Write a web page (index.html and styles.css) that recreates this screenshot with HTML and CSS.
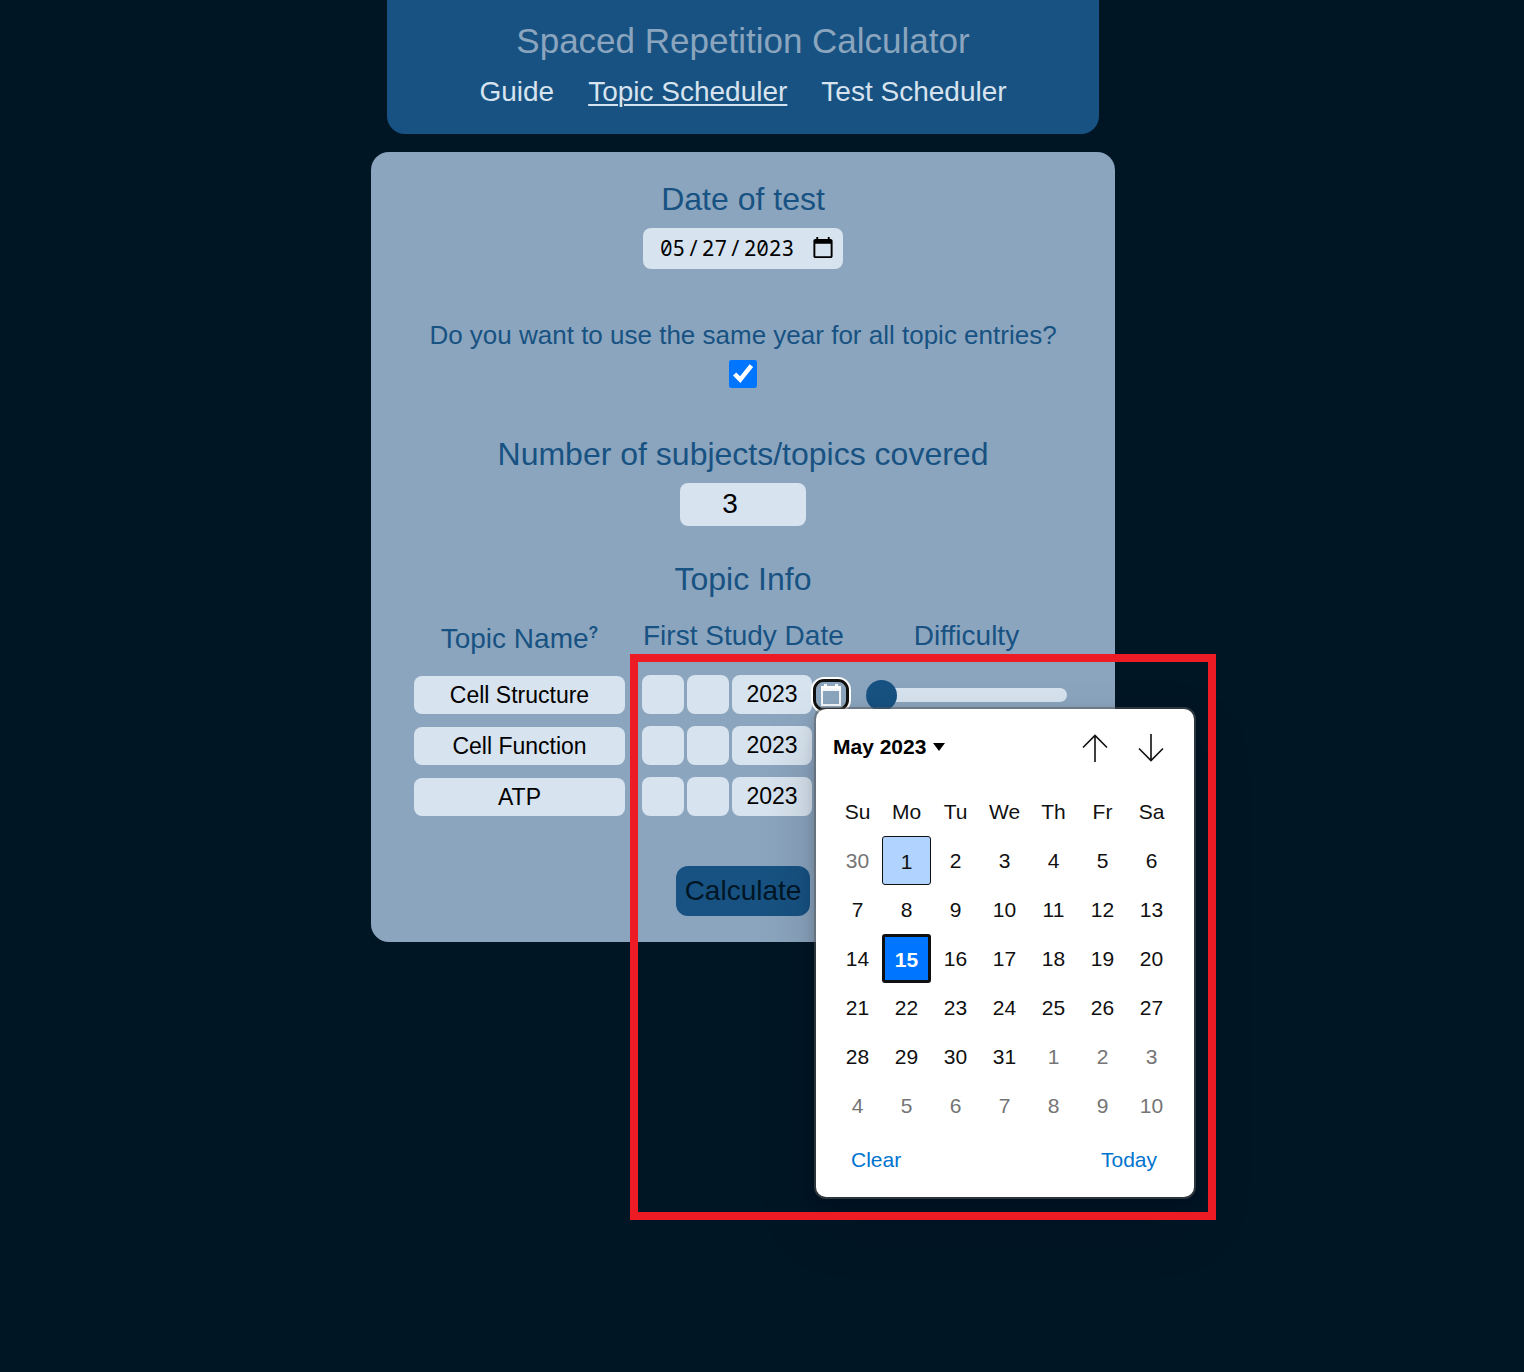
FILE: index.html
```html
<!DOCTYPE html>
<html lang="en-US">
<head>
<meta charset="utf-8">
<meta name="viewport" content="width=device-width, initial-scale=1">
<title>Spaced Repetition Calculator</title>
<link rel="stylesheet" href="styles.css">
</head>
<body>
<header class="site-header">
  <h1 class="site-title">Spaced Repetition Calculator</h1>
  <nav class="site-nav">
    <a href="#guide">Guide</a>
    <a href="#topics" class="active">Topic Scheduler</a>
    <a href="#tests">Test Scheduler</a>
  </nav>
</header>
<main>
<form class="card">
  <div class="field">
    <label class="field-label" for="test-date">Date of test</label>
    <input class="box test-date" id="test-date" type="date" value="2023-05-27">
  </div>
  <div class="field same-year">
    <label class="question" for="same-year">Do you want to use the same year for all topic entries?</label>
    <input class="check" id="same-year" type="checkbox" checked>
  </div>
  <div class="field topic-count">
    <label class="field-label" for="count">Number of subjects/topics covered</label>
    <input class="box count" id="count" type="number" value="3">
  </div>
  <h2 class="field-label topic-heading">Topic Info</h2>
  <div class="topics">
    <div class="topic-row heads">
      <div class="head" id="h-name">Topic Name<sup>?</sup></div>
      <div class="head head-date" id="h-date">First Study Date</div>
      <div class="head" id="h-diff">Difficulty</div>
    </div>
    <div class="topic-row">
      <input class="box name" type="text" value="Cell Structure" aria-labelledby="h-name">
      <div class="study-date">
        <input class="box part" type="text" aria-label="Month">
        <input class="box part" type="text" aria-label="Day">
        <input class="box year" type="text" value="2023" aria-label="Year">
        <button class="picker open" type="button" aria-label="Choose date">
          <svg width="20" height="22" viewBox="0 0 20 22"><path d="M1 3h18v18H1z" fill="none" stroke="currentColor" stroke-width="2"/><path d="M0 2h20v5H0zM3 0h3v3H3zM14 0h3v3h-3z" fill="currentColor"/></svg>
        </button>
        <div class="calendar">
          <div class="calendar-bar">
            <button class="month" type="button">May 2023 <svg width="12" height="8" viewBox="0 0 12 8"><path d="M0 0h12L6 8z" fill="#000"/></svg></button>
            <button class="arrow" type="button" aria-label="Previous month"><svg width="28" height="28" viewBox="0 0 28 28"><path d="M14 28V1M2 13.500 14 1.500l12 12" fill="none" stroke="#111" stroke-width="1.600"/></svg></button>
            <button class="arrow" type="button" aria-label="Next month"><svg width="28" height="28" viewBox="0 0 28 28"><path d="M14 0v27M2 14.500l12 12 12-12" fill="none" stroke="#111" stroke-width="1.600"/></svg></button>
          </div>
          <table class="days">
            <thead><tr><th>Su</th><th>Mo</th><th>Tu</th><th>We</th><th>Th</th><th>Fr</th><th>Sa</th></tr></thead>
            <tbody>
              <tr><td class="other">30</td><td><button type="button" class="day today">1</button></td><td>2</td><td>3</td><td>4</td><td>5</td><td>6</td></tr>
              <tr><td>7</td><td>8</td><td>9</td><td>10</td><td>11</td><td>12</td><td>13</td></tr>
              <tr><td>14</td><td><button type="button" class="day selected">15</button></td><td>16</td><td>17</td><td>18</td><td>19</td><td>20</td></tr>
              <tr><td>21</td><td>22</td><td>23</td><td>24</td><td>25</td><td>26</td><td>27</td></tr>
              <tr><td>28</td><td>29</td><td>30</td><td>31</td><td class="other">1</td><td class="other">2</td><td class="other">3</td></tr>
              <tr><td class="other">4</td><td class="other">5</td><td class="other">6</td><td class="other">7</td><td class="other">8</td><td class="other">9</td><td class="other">10</td></tr>
            </tbody>
          </table>
          <div class="calendar-foot">
            <button type="button">Clear</button>
            <button type="button">Today</button>
          </div>
        </div>
      </div>
      <input class="slider" type="range" min="0" max="10" value="0" aria-labelledby="h-diff">
    </div>
    <div class="topic-row">
      <input class="box name" type="text" value="Cell Function" aria-labelledby="h-name">
      <div class="study-date">
        <input class="box part" type="text" aria-label="Month">
        <input class="box part" type="text" aria-label="Day">
        <input class="box year" type="text" value="2023" aria-label="Year">
      </div>
      <input class="slider" type="range" min="0" max="10" value="0" aria-labelledby="h-diff">
    </div>
    <div class="topic-row">
      <input class="box name" type="text" value="ATP" aria-labelledby="h-name">
      <div class="study-date">
        <input class="box part" type="text" aria-label="Month">
        <input class="box part" type="text" aria-label="Day">
        <input class="box year" type="text" value="2023" aria-label="Year">
      </div>
      <input class="slider" type="range" min="0" max="10" value="0" aria-labelledby="h-diff">
    </div>
    <div class="highlight"></div>
  </div>
  <button class="calculate" type="submit">Calculate</button>
</form>
</main>
</body>
</html>
```
FILE: styles.css
```css
* { box-sizing: border-box; }
body {
  margin: 0;
  padding-right: 38px;
  min-height: 100vh;
  background: #001625;
  color: #175282;
  font-family: "Liberation Sans", Arial, sans-serif;
  font-size: 28px;
}
input, button { font-family: inherit; margin: 0; border: 0; padding: 0; }
button { background: none; cursor: pointer; }
h1, h2 { margin: 0; font-weight: 400; }

.site-header {
  max-width: 712px;
  margin: 0 auto 18px;
  padding: 21px 16px 26px;
  border-radius: 0 0 18px 18px;
  background: #175282;
  text-align: center;
}
.site-title { color: #8ba5be; font-size: 35px; line-height: 40px; }
.site-nav { display: flex; justify-content: center; gap: 34px; margin-top: 15px; line-height: 32px; }
.site-nav a { color: #d7e3ee; text-decoration: none; }
.site-nav .active { text-decoration: underline; text-decoration-thickness: 2px; text-underline-offset: 3px; }

.card {
  display: flex;
  flex-direction: column;
  align-items: center;
  max-width: 744px;
  margin: 0 auto;
  padding: 29px 43px 26px;
  border-radius: 18px;
  background: #8ba5be;
}
.field { display: flex; flex-direction: column; align-items: center; gap: 11px; }
.field-label { font-size: 32px; line-height: 36px; }
.same-year { margin-top: 51px; gap: 10px; }
.topic-count { margin-top: 48px; }
.question { font-size: 26px; line-height: 30px; }
.topic-heading { margin-top: 35px; }
.box { border-radius: 8px; background: #d7e3ee; color: #000; text-align: center; }
.test-date {
  width: 200px;
  height: 41px;
  padding: 0 8px 1px 16px;
  font-family: "Noto Sans Mono", "DejaVu Sans Mono", monospace;
  font-size: 21px;
  text-align: left;
}
.test-date::-webkit-datetime-edit-text { padding: 0 1px; }
.test-date::-webkit-calendar-picker-indicator { width: 24px; height: 24px; padding: 0; margin-left: 0; }
.check { width: 28px; height: 28px; accent-color: #0075ff; }
.count { width: 126px; height: 43px; padding: 0 11px 2px 0; font-size: 28px; }

.topics { position: relative; align-self: stretch; display: grid; gap: 12px; margin-top: 23px; }
.topic-row { display: grid; grid-template-columns: 211px 207px 201px; column-gap: 17px; align-items: center; height: 39px; }
.heads { align-items: start; height: 43px; }
.head { text-align: center; line-height: 32px; }
.head-date { text-align: left; padding-left: 1px; }
.head sup { font-size: 16px; font-weight: 700; line-height: 26px; }
.name { width: 100%; height: 38px; padding-top: 2px; font-size: 23px; }
.study-date { position: relative; display: flex; height: 39px; gap: 3px; align-items: center; }
.part { width: 42px; height: 39px; font-size: 23px; }
.year { width: 80px; height: 39px; font-size: 23px; }
.picker {
  display: flex;
  align-items: center;
  justify-content: center;
  width: 30px;
  height: 26px;
  border-radius: 8px;
  color: rgba(255, 255, 255, .9);
}
.picker.open { margin-left: 1px; outline: 3px solid #101010; box-shadow: 0 0 0 5px #fff; }

.slider { appearance: none; width: 100%; height: 31px; background: none; }
.slider::-webkit-slider-runnable-track { height: 14px; border-radius: 7px; background: #d7e3ee; }
.slider::-webkit-slider-thumb { appearance: none; width: 31px; height: 31px; margin-top: -8px; border-radius: 50%; background: #175282; }

.calendar {
  position: absolute;
  z-index: 2;
  top: 34px;
  left: 174px;
  width: 378px;
  padding: 10px 17px 23px;
  border-radius: 10px;
  background: #fff;
  color: #101010;
  font-size: 21px;
  box-shadow: 0 0 0 2px rgba(90, 90, 90, .5), 0 26px 58px rgba(0, 0, 20, .2), 0 5px 14px rgba(0, 0, 20, .18);
}
.calendar-bar { display: flex; align-items: center; height: 56px; padding-right: 12px; gap: 28px; }
.month { display: flex; align-items: center; gap: 7px; margin-right: auto; color: #000; font-size: 21px; font-weight: 700; }
.arrow { width: 28px; height: 28px; padding-top: 1px; }
.arrow svg { display: block; }
.days { width: 343px; margin: 12px 0 0; border-collapse: collapse; table-layout: fixed; line-height: 24px; }
.days th, .days td { height: 49px; padding: 0; font-weight: 400; text-align: center; }
.days td { line-height: 26px; }
.days .other { color: #757575; }
.day { display: block; width: 49px; height: 49px; padding-top: 2px; border-radius: 3px; color: #101010; font-size: 21px; }
.today { border: 1px solid #101010; background: #b0d3ff; }
.selected { border: 3px solid #101010; background: #0075ff; color: #fff; font-weight: 700; }
.calendar-foot { display: flex; justify-content: space-between; padding: 16px 20px 0 18px; }
.calendar-foot button { color: #0074d0; font-size: 21px; line-height: 28px; }

.highlight {
  position: absolute;
  z-index: 3;
  top: 34px;
  left: 216px;
  width: 586px;
  height: 566px;
  border: 8px solid #ed1c24;
  pointer-events: none;
}
.calculate {
  width: 134px;
  height: 50px;
  margin-top: 50px;
  border-radius: 12px;
  background: #175282;
  color: #001625;
  font-size: 28px;
}
```
